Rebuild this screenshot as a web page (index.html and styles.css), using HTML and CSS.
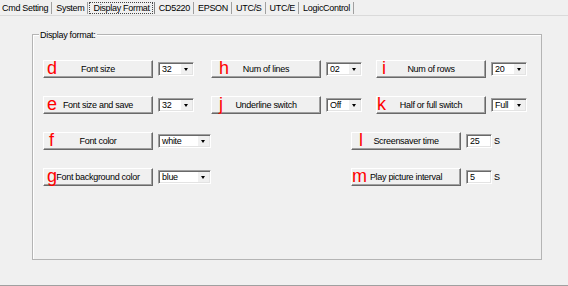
FILE: index.html
```
<!DOCTYPE html>
<html lang="en">
<head>
  <meta charset="UTF-8">
  <title>Display Format</title>
  <link rel="stylesheet" href="styles.css">
</head>
<body>

  <div class="window">
    <div class="tabs">
      <span class="tab">Cmd Setting</span>
      <span class="tab">System</span>
      <span class="tab activo"><span class="foco">Display Format</span></span>
      <span class="tab">CD5220</span>
      <span class="tab">EPSON</span>
      <span class="tab">UTC/S</span>
      <span class="tab">UTC/E</span>
      <span class="tab">LogicControl</span>
    </div>

    <div class="pagina">
      <div class="grupo">
        <span class="grupo-titulo">Display format:</span>

        <div class="rejilla">
          <!-- fila 1 -->
          <div class="celda col-1">
            <button class="boton"><span class="letra">d</span>Font size</button>
            <div class="combo"><span>32</span><i class="flecha"></i></div>
          </div>
          <div class="celda col-2">
            <button class="boton"><span class="letra lejos">h</span>Num of lines</button>
            <div class="combo"><span>02</span><i class="flecha"></i></div>
          </div>
          <div class="celda col-3">
            <button class="boton"><span class="letra medio">i</span>Num of rows</button>
            <div class="combo"><span>20</span><i class="flecha"></i></div>
          </div>

          <!-- fila 2 -->
          <div class="celda col-1">
            <button class="boton"><span class="letra">e</span>Font size and save</button>
            <div class="combo"><span>32</span><i class="flecha"></i></div>
          </div>
          <div class="celda col-2">
            <button class="boton"><span class="letra lejos">j</span>Underline switch</button>
            <div class="combo"><span>Off</span><i class="flecha"></i></div>
          </div>
          <div class="celda col-3">
            <button class="boton"><span class="letra cerca">k</span>Half or full switch</button>
            <div class="combo"><span>Full</span><i class="flecha"></i></div>
          </div>

          <!-- fila 3 -->
          <div class="celda col-1">
            <button class="boton"><span class="letra medio">f</span>Font color</button>
            <div class="combo ancho"><span>white</span><i class="flecha"></i></div>
          </div>
          <div class="celda col-ancha">
            <button class="boton"><span class="letra lejos">l</span>Screensaver time</button>
            <input class="caja" type="text" value="25">
            <span class="unidad">S</span>
          </div>

          <!-- fila 4 -->
          <div class="celda col-1">
            <button class="boton"><span class="letra">g</span>Font background color</button>
            <div class="combo ancho"><span>blue</span><i class="flecha"></i></div>
          </div>
          <div class="celda col-ancha">
            <button class="boton"><span class="letra cerca">m</span>Play picture interval</button>
            <input class="caja" type="text" value="5">
            <span class="unidad">S</span>
          </div>
        </div>
      </div>
    </div>
  </div>

</body>
</html>
```

FILE: styles.css
```
body {
  margin: 0;
  background-color: #f0f0f0;
  font-family: 'Liberation Sans', Arial, sans-serif;
  font-size: 9px;
  letter-spacing: -0.3px;
  color: #000;
}

.window {
  height: 285px;
  border-bottom: 1px solid #a0a0a0;
}

/* pestañas */

.tabs {
  display: flex;
  height: 16px;
  border-bottom: 1px solid #dadada;
  padding-top: 2px;
  box-sizing: border-box;
}

.tab {
  height: 12px;
  line-height: 12px;
  padding: 0 3px 0 4px;
  border-right: 1px solid #a0a0a0;
  white-space: nowrap;
}

.tab:first-child {
  padding-left: 2px;
}

.tab.activo {
  padding: 0 1px 0 1px;
  border-right-color: #808080;
}

.tab.activo .foco {
  display: block;
  height: 10px;
  line-height: 10px;
  padding: 0 2px 0 3px;
  border: 1px dotted #444;
}

/* grupo */

.pagina {
  padding: 18px 0 0 32px;
}

.grupo {
  position: relative;
  width: 508px;
  height: 224px;
  border: 1px solid #b4b4b4;
  box-shadow: inset 1px 1px #fff;
}

.grupo-titulo {
  position: absolute;
  top: -5px;
  left: 6px;
  padding: 0 1px;
  line-height: 10px;
  background-color: #f0f0f0;
}

.rejilla {
  display: grid;
  grid-template-columns: 168px 140px 25px 1fr;
  grid-auto-rows: 18px;
  row-gap: 18px;
  padding: 25px 0 0 10px;
}

.col-1 { grid-column: 1; }
.col-2 { grid-column: 2 / span 2; }
.col-3 { grid-column: 4; }
.col-ancha { grid-column: 3 / span 2; }

.celda {
  display: flex;
  align-items: center;
  gap: 5px;
}

/* botones */

.boton {
  position: relative;
  flex: none;
  width: 110px;
  height: 18px;
  padding: 0;
  font: inherit;
  letter-spacing: inherit;
  color: #000;
  background-color: #f0f0f0;
  border: 1px solid;
  border-color: #fff #696969 #696969 #fff;
  box-shadow: inset -1px -1px #a0a0a0;
}

.letra {
  position: absolute;
  top: -2px;
  left: 3px;
  font-size: 18px;
  line-height: 18px;
  letter-spacing: 0;
  color: #ff0000;
}

.letra.cerca { left: 0; }
.letra.medio { left: 5px; }
.letra.lejos { left: 7px; }

/* desplegables */

.combo {
  display: flex;
  align-items: center;
  justify-content: space-between;
  width: 36px;
  height: 14px;
  box-sizing: border-box;
  background-color: #fff;
  border: 1px solid;
  border-color: #a0a0a0 #fff #fff #a0a0a0;
  box-shadow: inset 1px 1px #696969, inset -1px -1px #e3e3e3;
  padding: 0 1px 0 3px;
}

.combo.ancho {
  width: 56px;
}

.flecha {
  width: 11px;
  height: 10px;
  background-color: #f0f0f0;
  position: relative;
}

.flecha::after {
  content: "";
  position: absolute;
  left: 3px;
  top: 4px;
  border-left: 2.5px solid transparent;
  border-right: 2.5px solid transparent;
  border-top: 3px solid #000;
}

/* cajas de texto */

.caja {
  width: 26px;
  height: 14px;
  box-sizing: border-box;
  margin: 0;
  padding: 0 0 0 3px;
  font: inherit;
  letter-spacing: inherit;
  background-color: #fff;
  border: 1px solid;
  border-color: #a0a0a0 #fff #fff #a0a0a0;
  box-shadow: inset 1px 1px #696969, inset -1px -1px #e3e3e3;
  outline: none;
}

.unidad {
  margin-left: -3px;
}
```
